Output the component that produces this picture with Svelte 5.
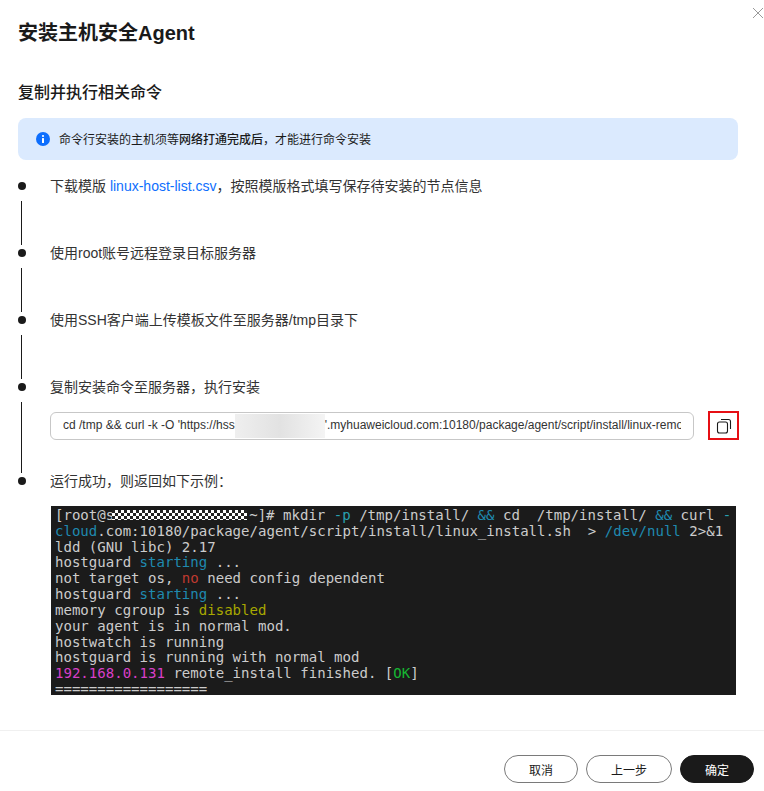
<script lang="ts">
  // Install-agent dialog: timeline of steps, copyable command, sample terminal output.
  const steps = ['使用root账号远程登录目标服务器', '使用SSH客户端上传模板文件至服务器/tmp目录下'];
  const footer = ['取消', '上一步'];
</script>

<div class="dialog">
  <button type="button" class="close" aria-label="关闭">
    <svg width="12" height="12" viewBox="0 0 12 12" fill="none" stroke="#9a9a9a" stroke-width="1" aria-hidden="true"><path d="M1 1l10 10M11 1L1 11" /></svg>
  </button>

  <h1>安装主机安全Agent</h1>
  <h2>复制并执行相关命令</h2>

  <div class="alert">
    <svg width="14" height="14" viewBox="0 0 14 14" aria-hidden="true">
      <circle cx="7" cy="7" r="7" fill="#0d6efd" />
      <rect x="6" y="6" width="2" height="5" rx="0.5" fill="#fff" />
      <circle cx="7" cy="4" r="1.1" fill="#fff" />
    </svg>
    <span>命令行安装的主机须等<b>网络打通完成后</b>，才能进行命令安装</span>
  </div>

  <ol class="steps">
    <li class="step">
      <div class="rail"><i class="dot"></i><i class="line"></i></div>
      <div class="content">下载模版 <a href="#csv">linux-host-list.csv</a>，按照模版格式填写保存待安装的节点信息</div>
    </li>
    {#each steps as s}
      <li class="step">
        <div class="rail"><i class="dot"></i><i class="line"></i></div>
        <div class="content">{s}</div>
      </li>
    {/each}
    <li class="step tall">
      <div class="rail"><i class="dot"></i><i class="line"></i></div>
      <div class="content">
        复制安装命令至服务器，执行安装
        <div class="cmd-row">
          <div class="cmd">
            <span class="cmd-text">cd /tmp &amp;&amp; curl -k -O 'https://hss<span class="blur"></span>'.myhuaweicloud.com:10180/package/agent/script/install/linux-remote_install.sh'</span>
          </div>
          <button type="button" class="copy" aria-label="复制">
            <svg width="16" height="16" viewBox="0 0 16 16" fill="none" stroke="#1a1a1a" stroke-width="1.1" aria-hidden="true">
              <rect x="1.5" y="4" width="10" height="11" rx="2" />
              <path d="M5 1.5h7.5a2 2 0 0 1 2 2V11" />
            </svg>
          </button>
        </div>
      </div>
    </li>
    <li class="step last">
      <div class="rail"><i class="dot"></i></div>
      <div class="content">
        运行成功，则返回如下示例：
        <pre class="term">[root@s<span class="mask"></span>~]# mkdir <span class="dim">-p</span> /tmp/install/ <span class="blue">&amp;&amp;</span> cd  /tmp/install/ <span class="blue">&amp;&amp;</span> curl <span class="dim">-</span>
<span class="blue">cloud</span>.com:10180/package/agent/script/install/linux_install.sh  &gt; <span class="blue">/dev/null</span> 2&gt;&amp;1
ldd (GNU libc) 2.17
hostguard <span class="blue">starting</span> ...
not target os, <span class="red">no</span> need config dependent
hostguard <span class="blue">starting</span> ...
memory cgroup is <span class="yellow">disabled</span>
your agent is in normal mod.
hostwatch is running
hostguard is running with normal mod
<span class="pink">192.168.0.131</span> remote_install finished. [<span class="green">OK</span>]
==================</pre>
      </div>
    </li>
  </ol>

  <footer>
    {#each footer as f}
      <button type="button" class="btn">{f}</button>
    {/each}
    <button type="button" class="btn primary">确定</button>
  </footer>
</div>

<style>
  :global(body) {
    background: #fff;
  }
  .dialog {
    position: relative;
    height: 791px;
    display: flex;
    flex-direction: column;
    overflow: hidden;
    color: #1a1a1a;
    font-family: 'Liberation Sans', 'Noto Sans CJK SC', sans-serif;
    font-size: 12px;
  }
  .close {
    position: absolute;
    top: 7px;
    right: 0;
    padding: 0;
    border: 0;
    background: none;
    line-height: 0;
  }
  h1 {
    margin: 21px 0 0 18px;
    font-size: 20px;
    line-height: 24px;
    font-weight: 700;
  }
  h2 {
    margin: 36px 0 0 18px;
    font-size: 16px;
    line-height: 24px;
    font-weight: 500;
  }
  .alert {
    margin: 13px 26px 0 18px;
    height: 42px;
    display: flex;
    align-items: center;
    gap: 9px;
    padding-left: 18px;
    background: #dbeafe;
    border-radius: 8px;
  }
  .alert span {
    margin-top: -2px;
  }
  .alert b {
    font-weight: 500;
  }
  .steps {
    list-style: none;
    margin: 18px 0 0 18px;
    padding: 0;
    flex: 1;
  }
  .step {
    display: flex;
    height: 67px;
  }
  .step.tall {
    height: 94px;
  }
  .rail {
    width: 32px;
    flex: none;
    display: flex;
    flex-direction: column;
    padding-top: 4px;
  }
  .dot {
    width: 8px;
    height: 8px;
    border-radius: 50%;
    background: #1a1a1a;
  }
  .line {
    width: 1px;
    flex: 1;
    margin: 11px 0 0 3px;
    background: #1a1a1a;
  }
  .content {
    flex: 1;
    min-width: 0;
    font-size: 14px;
    line-height: 16px;
    color: #333;
  }
  a {
    color: #0d6efd;
    text-decoration: none;
  }
  .cmd-row {
    display: flex;
    align-items: center;
    margin-top: 16px;
    margin-right: 25px;
    gap: 14px;
  }
  .cmd {
    flex: 1;
    min-width: 0;
    height: 28px;
    box-sizing: border-box;
    padding: 0 12px;
    display: flex;
    align-items: center;
    border: 1px solid #c7c7c7;
    border-radius: 6px;
    font-size: 12px;
    color: #333;
  }
  .cmd-text {
    display: block;
    white-space: pre;
    overflow: hidden;
  }
  .blur {
    display: inline-block;
    width: 90px;
    height: 26px;
    vertical-align: middle;
    margin-top: -2px;
    background: linear-gradient(90deg, #efefef, #e2e2e2 50%, #f4f4f4);
  }
  .copy {
    width: 31px;
    height: 29px;
    flex: none;
    padding: 0;
    display: flex;
    align-items: center;
    justify-content: center;
    background: #fff;
    border: 2px solid #e60f14;
  }
  .term {
    margin: 17px 28px 0 1px;
    height: 189px;
    overflow: hidden;
    box-sizing: border-box;
    padding: 2px 0 0 4px;
    background: #1b1b1b;
    color: #cccccc;
    font-family: 'DejaVu Sans Mono', monospace;
    font-size: 14.06px;
    line-height: 15.82px;
    white-space: pre;
  }
  .mask {
    display: inline-block;
    width: 135px;
    height: 10px;
    margin-left: -2px;
    margin-right: 2px;
    background: repeating-conic-gradient(#fff 0 25%, #222 0 50%) 0 0 / 6px 6px;
  }
  .blue { color: #1f8ab0; }
  .dim { color: #28a0b0; }
  .red { color: #c03a30; }
  .yellow { color: #a8a800; }
  .pink { color: #d93fc8; }
  .green { color: #16b832; }
  footer {
    height: 61px;
    flex: none;
    border-top: 1px solid #f0f0f0;
    display: flex;
    justify-content: flex-end;
    gap: 8px;
    padding: 24px 10px 0 0;
    box-sizing: border-box;
  }
  .btn {
    min-width: 74px;
    height: 28px;
    padding: 0 24px;
    border: 1px solid #7a7a7a;
    border-radius: 14px;
    background: #fff;
    color: #1a1a1a;
    font: inherit;
  }
  .primary {
    background: #1a1a1a;
    border-color: #1a1a1a;
    color: #fff;
  }
</style>
